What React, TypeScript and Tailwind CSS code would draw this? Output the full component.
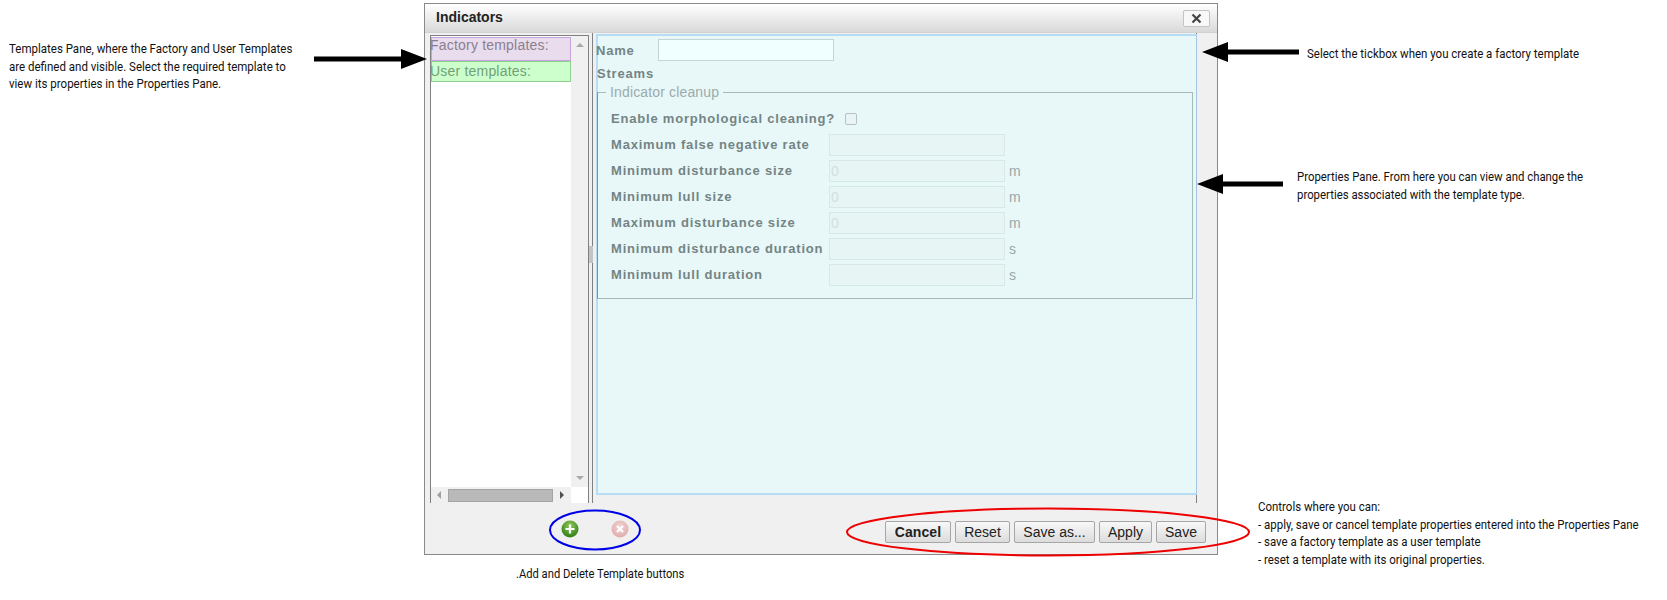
const sans = "font-['Liberation_Sans',Arial,sans-serif]";
const note = "absolute whitespace-nowrap origin-left font-['Roboto',sans-serif] text-[13px] leading-[17.5px] text-[#111]";

function Arrow({ cls, dir, w }: { cls: string; dir: "l" | "r"; w: number }) {
  const head = 26;
  return (
    <svg className={`absolute ${cls}`} width={w} height={22} viewBox={`0 0 ${w} 22`}>
      {dir === "r" ? (
        <path d={`M0 8.5H${w - head}V1L${w} 11L${w - head} 21V13.5H0Z`} fill="#000" />
      ) : (
        <path d={`M${w} 8.5H${head}V1L0 11L${head} 21V13.5H${w}Z`} fill="#000" />
      )}
    </svg>
  );
}

function Field({ label, value, unit }: { label: string; value?: string; unit?: string }) {
  return (
    <div className="flex items-center h-[22px]">
      <span className="w-[218px] shrink-0 whitespace-nowrap text-[13px] font-bold tracking-[0.8px] text-[#748484]">{label}</span>
      <div className="w-[176px] h-[22px] border border-[#d6e8e8] bg-[#e7f5f5] text-[14px] leading-[20px] pl-[1px] text-[#d0e0e0]">{value}</div>
      {unit && <span className="ml-[4px] text-[14px] text-[#98a8a8]">{unit}</span>}
    </div>
  );
}

function Btn({ children, w, bold }: { children: string; w: string; bold?: boolean }) {
  return (
    <div className={`${w} h-[22px] flex items-center justify-center rounded-[2px] border border-[#a6a6a6] bg-gradient-to-b from-[#f8f8f8] to-[#dcdcdc] text-[14px] text-[#222] ${bold ? "font-bold tracking-[0.1px]" : ""}`}>
      {children}
    </div>
  );
}

export default function App() {
  return (
    <div className={`relative w-[1667px] h-[600px] bg-white overflow-hidden pt-[3px] pl-[424px] ${sans}`}>
      <div className="w-[794px] h-[552px] border border-[#8a8a8a] bg-[#f0f0f0] flex flex-col">
        <div className="h-[29px] shrink-0 flex items-center justify-between pl-[11px] pr-[7px] bg-gradient-to-b from-white to-[#d9d9d9] border-b border-[#d2d2d2]">
          <span className="text-[14px] font-bold text-[#222] -mt-[2px]">Indicators</span>
          <div className="w-[27px] h-[17px] flex items-center justify-center bg-[#f8f8f8] border border-[#c4c4c4] rounded-[2px]">
            <svg width="11" height="11" viewBox="0 0 11 11"><path d="M1.5 1.5L9.5 9.5M9.5 1.5L1.5 9.5" stroke="#444" strokeWidth="2.2" /></svg>
          </div>
        </div>

        <div className="h-[470px] shrink-0 flex pl-[5px]">
          <div className="mt-[2px] w-[159px] border-x border-t border-[#808080] bg-white flex flex-col">
            <div className="flex-1 flex min-h-0">
              <div className="flex-1 pt-[1px]">
                <div className="h-[24px] bg-[#e9dcec] border border-[#c3a4de] text-[14px] leading-[14px] indent-[-2px] text-[#8a7f90] tracking-[0.2px]">Factory templates:</div>
                <div className="h-[21px] bg-[#ccffcc] border border-[#8fd08f] text-[14px] leading-[18px] indent-[-2px] text-[#72a078] tracking-[0.2px]">User templates:</div>
              </div>
              <div className="w-[17px] bg-[#f0f0f0] flex flex-col items-center justify-between py-[7px]">
                <div className="w-0 h-0 border-x-[4px] border-x-transparent border-b-[4px] border-b-[#aaaaaa]" />
                <div className="w-0 h-0 border-x-[4px] border-x-transparent border-t-[4px] border-t-[#aaaaaa]" />
              </div>
            </div>
            <div className="h-[16px] shrink-0 flex">
              <div className="flex-1 bg-[#f0f0f0] flex items-center pl-[6px]">
                <div className="w-0 h-0 border-y-[4px] border-y-transparent border-r-[4px] border-r-[#a0a0a0]" />
                <div className="ml-[7px] w-[105px] h-[13px] bg-[#b9b9b9] border border-[#a4a4a4]" />
                <div className="ml-[7px] w-0 h-0 border-y-[4px] border-y-transparent border-l-[4px] border-l-[#505050]" />
              </div>
              <div className="w-[17px] bg-white" />
            </div>
          </div>

          <div className="relative w-[3px]">
            <div className="absolute left-0 top-[213px] w-[4px] h-[17px] bg-[#c4c4c4]" />
          </div>

          <div className="w-[605px] border-l border-r border-l-[#808080] border-r-[#808080] pl-[3px] pt-[1px] h-[470px]">
            <div className="h-[461px] -mr-px border-2 border-[#b6dcf6] border-r-[1px] border-r-[#a3c6e6] bg-[#e8f8f9]">
              <div className="flex items-center h-[22px] mt-[3px]">
                <span className="w-[60px] -ml-[2px] mr-[2px] pt-px text-[13px] font-bold tracking-[0.8px] text-[#748484]">Name</span>
                <div className="w-[176px] h-[22px] border border-[#c2d6d6] bg-[#f0ffff]" />
              </div>
              <div className="h-[16px] mt-[5px] -mb-px -ml-px leading-[16px] text-[13px] font-bold tracking-[0.8px] text-[#748484]">Streams</div>
              <fieldset className="mt-[3px] -ml-px w-[596px] h-[215px] border border-[#a6baba] border-l-[#6e94bc] pl-[13px] pt-[8px]">
                <legend className="-ml-[5px] px-[4px] h-[16px] leading-[16px] text-[14px] tracking-[0.15px] text-[#9cabab]">Indicator cleanup</legend>
                <div className="flex flex-col gap-[4px]">
                  <div className="flex items-center h-[22px]">
                    <span className="w-[234px] shrink-0 whitespace-nowrap text-[13px] font-bold tracking-[0.8px] text-[#748484]">Enable morphological cleaning?</span>
                    <div className="w-[12px] h-[12px] rounded-[2px] border border-[#b4c4c4] bg-[#eaf4f4]" />
                  </div>
                  <Field label="Maximum false negative rate" />
                  <Field label="Minimum disturbance size" value="0" unit="m" />
                  <Field label="Minimum lull size" value="0" unit="m" />
                  <Field label="Maximum disturbance size" value="0" unit="m" />
                  <Field label="Minimum disturbance duration" unit="s" />
                  <Field label="Minimum lull duration" unit="s" />
                </div>
              </fieldset>
            </div>
          </div>
        </div>

        <div className="flex-1 flex items-start pt-[18px] pl-[136px] pr-[11px]">
          <svg className="-mt-px" width="18" height="18" viewBox="0 0 18 18">
            <defs>
              <radialGradient id="g" cx="50%" cy="30%" r="70%"><stop offset="0%" stopColor="#8fc95a" /><stop offset="100%" stopColor="#2f7d14" /></radialGradient>
              <radialGradient id="r" cx="50%" cy="35%" r="70%"><stop offset="0%" stopColor="#f0d4d4" /><stop offset="100%" stopColor="#dfa8a8" /></radialGradient>
            </defs>
            <circle cx="9" cy="9" r="8.5" fill="url(#g)" />
            <path d="M9 4.5V13.5M4.5 9H13.5" stroke="#fff" strokeWidth="2.2" />
          </svg>
          <svg className="ml-[32px] -mt-px" width="18" height="18" viewBox="0 0 18 18">
            <circle cx="9" cy="9" r="8.5" fill="url(#r)" />
            <path d="M6 6L12 12M12 6L6 12" stroke="#fff" strokeWidth="2.2" />
          </svg>
          <div className="ml-auto flex gap-[4px]">
            <Btn w="w-[66px]" bold>Cancel</Btn>
            <Btn w="w-[55px]">Reset</Btn>
            <Btn w="w-[81px]">Save as...</Btn>
            <Btn w="w-[53px]">Apply</Btn>
            <Btn w="w-[50px]">Save</Btn>
          </div>
        </div>
      </div>

      <Arrow cls="left-[314px] top-[48px]" dir="r" w={113} />
      <Arrow cls="left-[1202px] top-[41px]" dir="l" w={97} />
      <Arrow cls="left-[1197px] top-[173px]" dir="l" w={86} />

      <svg className="absolute left-[546px] top-[507px]" width="98" height="46" viewBox="0 0 98 46">
        <ellipse cx="49" cy="23" rx="45" ry="19.5" fill="none" stroke="#0000e6" strokeWidth="2" />
      </svg>
      <svg className="absolute left-[844px] top-[505px]" width="408" height="54" viewBox="0 0 408 54">
        <ellipse cx="204" cy="27" rx="201" ry="23.5" fill="none" stroke="#ee0000" strokeWidth="2" />
      </svg>

      <div className={`${note} scale-x-[0.885] left-[9px] top-[40px]`}>
        <div>Templates Pane, where the Factory and User Templates</div>
        <div>are defined and visible. Select the required template to</div>
        <div>view its properties in the Properties Pane.</div>
      </div>
      <div className={`${note} scale-x-[0.882] left-[1307px] top-[45px]`}>Select the tickbox when you create a factory template</div>
      <div className={`${note} scale-x-[0.875] left-[1297px] top-[168px]`}>
        <div>Properties Pane. From here you can view and change the</div>
        <div>properties associated with the template type.</div>
      </div>
      <div className={`${note} scale-x-[0.882] left-[1258px] top-[498px]`}>
        <div>Controls where you can:</div>
        <div>- apply, save or cancel template properties entered into the Properties Pane</div>
        <div>- save a factory template as a user template</div>
        <div>- reset a template with its original properties.</div>
      </div>
      <div className={`${note} scale-x-[0.86] left-[516px] top-[565px]`}>.Add and Delete Template buttons</div>
    </div>
  );
}
